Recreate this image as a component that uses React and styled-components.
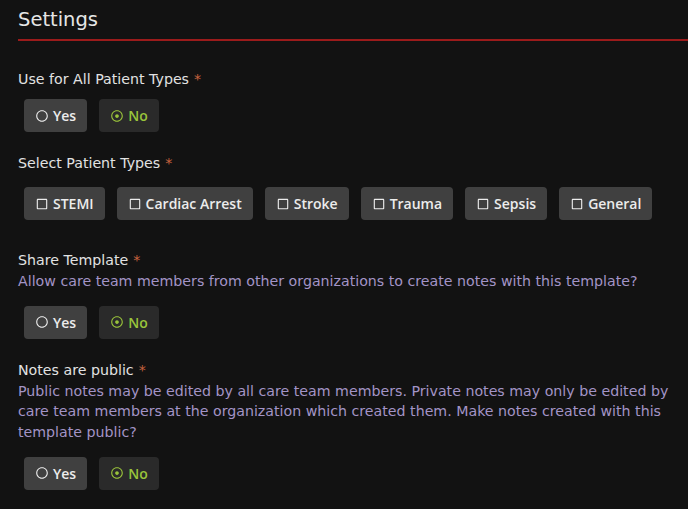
import React from 'react';
import styled, { createGlobalStyle } from 'styled-components';
import { FaRegCircle, FaRegDotCircle, FaRegSquare } from 'react-icons/fa';

const GlobalStyle = createGlobalStyle`
  html, body {
    margin: 0;
    padding: 0;
    background: #121212;
  }
  body {
    font-family: "DejaVu Sans", "Open Sans", sans-serif;
    color: #e4e4e4;
  }
`;

const Page = styled.div`
  padding: 4px 0 0 18px;
  min-height: 509px;
  box-sizing: border-box;
`;

const Heading = styled.h2`
  margin: 0;
  font-size: 19.5px;
  font-weight: 400;
  line-height: 32px;
  color: #e6e6e6;
  padding-bottom: 3px;
  border-bottom: 2px solid #9b1b1b;
`;

const Section = styled.div`
  margin-top: ${p => p.top}px;
`;

const Label = styled.div`
  font-size: 14.2px;
  line-height: 21px;
  color: #e2e2e2;
`;

const Star = styled.span`
  color: #c8623f;
  margin-left: 5px;
`;

const Desc = styled.div`
  font-size: 14.2px;
  line-height: 20.7px;
  color: #a394c6;
  padding-right: 4px;
`;

const Group = styled.div`
  display: flex;
  gap: 12px;
  margin: ${p => p.top}px 0 0 6px;
`;

const Btn = styled.div`
  display: flex;
  align-items: center;
  gap: 5px;
  height: 33px;
  padding: 0 11px 0 12px;
  border-radius: 4px;
  box-sizing: border-box;
  font-family: "Open Sans", "DejaVu Sans", sans-serif;
  font-size: 14px;
  font-weight: 600;
  background: ${p => (p.active ? '#2a2a2a' : '#404040')};
  color: ${p => (p.active ? '#9ac43b' : '#ececec')};
  svg {
    width: 12px;
    height: 12px;
  }
`;

function YesNo({ top }) {
  return (
    <Group top={top}>
      <Btn><FaRegCircle />Yes</Btn>
      <Btn active><FaRegDotCircle />No</Btn>
    </Group>
  );
}

const types = ['STEMI', 'Cardiac Arrest', 'Stroke', 'Trauma', 'Sepsis', 'General'];

export default function App() {
  return (
    <Page>
      <GlobalStyle />
      <Heading>Settings</Heading>

      <Section top={28}>
        <Label>Use for All Patient Types<Star>*</Star></Label>
        <YesNo top={9} />
      </Section>

      <Section top={21}>
        <Label>Select Patient Types<Star>*</Star></Label>
        <Group top={13}>
          {types.map(t => (
            <Btn key={t}><FaRegSquare />{t}</Btn>
          ))}
        </Group>
      </Section>

      <Section top={30}>
        <Label>Share Template<Star>*</Star></Label>
        <Desc>Allow care team members from other organizations to create notes with this template?</Desc>
        <YesNo top={14} />
      </Section>

      <Section top={21}>
        <Label>Notes are public<Star>*</Star></Label>
        <Desc>
          Public notes may be edited by all care team members. Private notes may only be edited by care team
          members at the organization which created them. Make notes created with this template public?
        </Desc>
        <YesNo top={14} />
      </Section>
    </Page>
  );
}
